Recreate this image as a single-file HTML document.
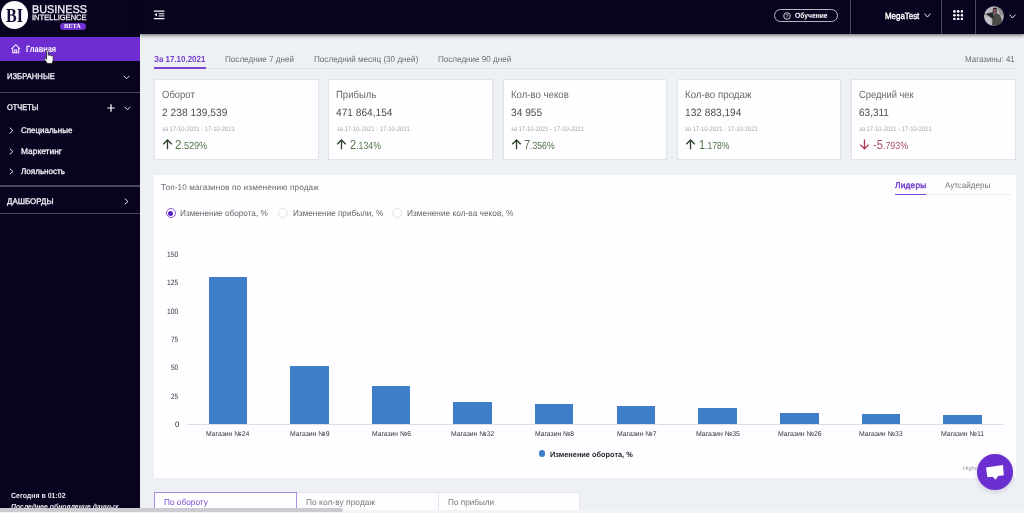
<!DOCTYPE html>
<html lang="ru"><head><meta charset="utf-8"><title>Business Intelligence</title>
<style>
html,body{margin:0;padding:0}
body{width:1024px;height:513px;overflow:hidden;position:relative;background:#eef1f4;font-family:"Liberation Sans", sans-serif;text-rendering:geometricPrecision}
.abs{position:absolute}
#txt{position:absolute;left:0;top:0;width:1024px;height:513px;will-change:transform;opacity:.999}
.sf{font-family:"Liberation Serif", serif}
.t{position:absolute;white-space:nowrap;line-height:1;display:block;transform-origin:0 0}
#side{position:absolute;left:0;top:0;width:140px;height:513px;background:#0a0320}
#head{position:absolute;left:140px;top:0;width:884px;height:33.5px;background:#0a0320;box-shadow:0 1px 4px rgba(0,0,0,.65)}
.sdiv{position:absolute;left:0;width:140px;height:1.4px;background:#4b4660}
.hdiv{position:absolute;top:0;width:1.2px;height:33.5px;background:#4e4a60}
.card{position:absolute;top:79px;width:164.6px;height:80.9px;background:#fefdff;border:1px solid #e1e3e7;box-sizing:border-box}
.bar{position:absolute;width:38.6px;background:#3f7dc8}
.radio{position:absolute;width:10px;height:10px;border-radius:50%;box-sizing:border-box;border:1px solid #e2e2e7;background:#fff}
.btab{position:absolute;top:492px;height:24px;background:#fefdff;box-sizing:border-box;border:1px solid #e4e4ea}
</style></head><body>
<div id="side"></div>
<div id="head"></div>
<!-- logo -->
<div class="abs" style="left:0.6px;top:1.4px;width:27.8px;height:27.8px;border-radius:50%;background:#fdfcff"></div>
<div class="abs" style="left:60.3px;top:23px;width:26px;height:6.8px;border-radius:3.4px;background:#6f33d3"></div>
<!-- active nav -->
<div class="abs" style="left:0;top:36.5px;width:140px;height:24.1px;background:#6d2dd0"></div>
<svg class="abs" style="left:10.8px;top:43.8px" width="10" height="10" viewBox="0 0 10 10"><path d="M0.4 4.8L4.7 0.7 9 4.8M1.7 3.9V8.7H7.7V3.9M3.7 8.7V5.9H5.7V8.7" fill="none" stroke="#f3ecff" stroke-width="1.05" stroke-linejoin="miter"/></svg>
<div class="sdiv" style="top:91.8px"></div>
<div class="sdiv" style="top:185.4px"></div>
<div class="sdiv" style="top:212.8px"></div>
<!-- sidebar chevrons -->
<svg class="abs" style="left:123.3px;top:75.4px" width="7" height="5" viewBox="0 0 7 5"><path d="M0.7 0.8L3.5 3.8 6.3 0.8" fill="none" stroke="#e8e6ee" stroke-width="1"/></svg>
<svg class="abs" style="left:123.5px;top:105.5px" width="7" height="5" viewBox="0 0 7 5"><path d="M0.7 0.8L3.5 3.8 6.3 0.8" fill="none" stroke="#e8e6ee" stroke-width="1"/></svg>
<svg class="abs" style="left:107.2px;top:104.4px" width="8" height="8" viewBox="0 0 8 8"><path d="M4 0.3V7.7M0.3 4H7.7" fill="none" stroke="#fff" stroke-width="1.2"/></svg>
<svg class="abs" style="left:8.6px;top:127.4px" width="5" height="7" viewBox="0 0 5 7"><path d="M0.8 0.7L3.9 3.5 0.8 6.3" fill="none" stroke="#e8e6ee" stroke-width="1"/></svg>
<svg class="abs" style="left:8.6px;top:147.7px" width="5" height="7" viewBox="0 0 5 7"><path d="M0.8 0.7L3.9 3.5 0.8 6.3" fill="none" stroke="#e8e6ee" stroke-width="1"/></svg>
<svg class="abs" style="left:8.6px;top:167.7px" width="5" height="7" viewBox="0 0 5 7"><path d="M0.8 0.7L3.9 3.5 0.8 6.3" fill="none" stroke="#e8e6ee" stroke-width="1"/></svg>
<svg class="abs" style="left:124.3px;top:197.8px" width="5" height="7" viewBox="0 0 5 7"><path d="M0.8 0.7L3.9 3.5 0.8 6.3" fill="none" stroke="#e8e6ee" stroke-width="1"/></svg>
<!-- header icons -->
<svg class="abs" style="left:154px;top:10.4px" width="11" height="10" viewBox="0 0 11 10"><path d="M0 1.15H10.4M0 8.5H10.4" stroke="#fff" stroke-width="1.25" fill="none"/><path d="M4.6 3.8H10.4M4.6 5.95H10.4" stroke="#fff" stroke-width="1" fill="none"/><path d="M2.9 2.7V6.6L0.6 4.65Z" fill="#fff"/></svg>
<div class="abs" style="left:773.6px;top:8.7px;width:64.4px;height:13.4px;box-sizing:border-box;border:1px solid #b9b6c4;border-radius:7px"></div>
<svg class="abs" style="left:783px;top:11.6px" width="8" height="8" viewBox="0 0 8 8"><circle cx="4" cy="4" r="3.3" fill="none" stroke="#fff" stroke-width="0.8"/><path d="M3 3.2C3 2.3 5 2.3 5 3.2C5 3.9 4 3.9 4 4.7M4 5.5V6.1" fill="none" stroke="#fff" stroke-width="0.7"/></svg>
<div class="hdiv" style="left:849.8px"></div>
<div class="hdiv" style="left:940.6px"></div>
<div class="hdiv" style="left:974.6px"></div>
<svg class="abs" style="left:924.3px;top:13.4px" width="7" height="5" viewBox="0 0 7 5"><path d="M0.5 0.6L3.5 4 6.5 0.6" fill="none" stroke="#eceaf2" stroke-width="1"/></svg>
<svg class="abs" style="left:953px;top:10px" width="10.4" height="10.4" viewBox="0 0 10.4 10.4"><g fill="#fff"><circle cx="1.4" cy="1.4" r="1.3"/><circle cx="5.2" cy="1.4" r="1.3"/><circle cx="9" cy="1.4" r="1.3"/><circle cx="1.4" cy="5.2" r="1.3"/><circle cx="5.2" cy="5.2" r="1.3"/><circle cx="9" cy="5.2" r="1.3"/><circle cx="1.4" cy="9" r="1.3"/><circle cx="5.2" cy="9" r="1.3"/><circle cx="9" cy="9" r="1.3"/></g></svg>
<svg class="abs" style="left:984.2px;top:5.5px" width="20" height="20" viewBox="0 0 20 20"><defs><clipPath id="av"><circle cx="10" cy="10" r="9.8"/></clipPath></defs><circle cx="10" cy="10" r="9.8" fill="#b6b6ba"/><g clip-path="url(#av)"><path d="M11 0H20V11L16 8 13.5 3Z" fill="#8e8e93"/><path d="M0 9L6 12 8 20H0Z" fill="#c4c4c8"/><path d="M8.2 20L8.4 11 10 8 13 7.2 16 9 17.6 13 18.2 20Z" fill="#4b4a46"/><path d="M1.5 8L9.2 5.9 9.4 13.2 5.5 10.4Z" fill="#26252b"/><ellipse cx="10.9" cy="4.9" rx="2.3" ry="2.9" fill="#5c4f50"/><path d="M8.7 3.6C9 1.4 12.6 1.2 13.2 3.6L12.6 2.9H9.2Z" fill="#1e1d22"/><circle cx="10.5" cy="4" r="0.75" fill="#d8465a"/><circle cx="11.3" cy="5.9" r="0.7" fill="#d8465a"/></g></svg>
<svg class="abs" style="left:1008.7px;top:13.8px" width="7" height="5" viewBox="0 0 7 5"><path d="M0.5 0.6L3.5 4 6.5 0.6" fill="none" stroke="#eceaf2" stroke-width="1"/></svg>
<!-- tabs -->
<div class="abs" style="left:154px;top:68.2px;width:862px;height:1px;background:#e1e4e9"></div>
<div class="abs" style="left:154px;top:66.8px;width:52px;height:2px;background:#7a45d4"></div>
<div class="card" style="left:154px"></div>
<svg class="abs" style="left:162px;top:139.3px" width="11" height="11" viewBox="0 0 11 11"><path d="M5.5 10.3V1.2M1.3 5.2L5.5 1 9.7 5.2" fill="none" stroke="#2c3e2a" stroke-width="1.3"/></svg>
<div class="card" style="left:328.3px"></div>
<svg class="abs" style="left:336.3px;top:139.3px" width="11" height="11" viewBox="0 0 11 11"><path d="M5.5 10.3V1.2M1.3 5.2L5.5 1 9.7 5.2" fill="none" stroke="#2c3e2a" stroke-width="1.3"/></svg>
<div class="card" style="left:502.6px"></div>
<svg class="abs" style="left:510.6px;top:139.3px" width="11" height="11" viewBox="0 0 11 11"><path d="M5.5 10.3V1.2M1.3 5.2L5.5 1 9.7 5.2" fill="none" stroke="#2c3e2a" stroke-width="1.3"/></svg>
<div class="card" style="left:676.9px"></div>
<svg class="abs" style="left:684.9px;top:139.3px" width="11" height="11" viewBox="0 0 11 11"><path d="M5.5 10.3V1.2M1.3 5.2L5.5 1 9.7 5.2" fill="none" stroke="#2c3e2a" stroke-width="1.3"/></svg>
<div class="card" style="left:851.2px"></div>
<svg class="abs" style="left:859.2px;top:139.3px" width="11" height="11" viewBox="0 0 11 11"><path d="M5.5 0.5V9.6M1.3 5.6L5.5 9.8 9.7 5.6" fill="none" stroke="#b03a50" stroke-width="1.3"/></svg>

<!-- chart panel -->
<div class="abs" style="left:154px;top:175px;width:862px;height:302.8px;background:#fefdff"></div>
<div class="abs" style="left:895px;top:194.4px;width:115.5px;height:1px;background:#ececf1"></div>
<div class="abs" style="left:894.8px;top:193.6px;width:31.6px;height:1.6px;background:#7a45d4"></div>
<div class="radio" style="left:165.5px;top:208.2px;border-color:#8a5ad8"></div>
<div class="abs" style="left:167.9px;top:210.6px;width:5.2px;height:5.2px;border-radius:50%;background:#5a1fc4"></div>
<div class="radio" style="left:278px;top:208.2px"></div>
<div class="radio" style="left:392px;top:208.2px"></div>
<div class="abs" style="left:187px;top:424.3px;width:816.4px;height:1px;background:#d9dfea"></div>
<div class="bar" style="left:208.6px;top:277.2px;height:147.1px"></div><div class="bar" style="left:290.1px;top:366.0px;height:58.3px"></div><div class="bar" style="left:371.8px;top:385.6px;height:38.7px"></div><div class="bar" style="left:453.4px;top:402.4px;height:21.9px"></div><div class="bar" style="left:534.9px;top:403.9px;height:20.4px"></div><div class="bar" style="left:616.6px;top:405.5px;height:18.8px"></div><div class="bar" style="left:698.3px;top:407.8px;height:16.5px"></div><div class="bar" style="left:780.1px;top:412.6px;height:11.7px"></div><div class="bar" style="left:861.7px;top:414.3px;height:10.0px"></div><div class="bar" style="left:943.3px;top:414.9px;height:9.4px"></div>
<div class="abs" style="left:538.7px;top:450.4px;width:6.8px;height:6.8px;border-radius:50%;background:#3f7dc8"></div>
<!-- bottom tabs -->
<div class="btab" style="left:296px;width:143px"></div>
<div class="btab" style="left:438px;width:142px"></div>
<div class="btab" style="left:153.6px;width:143.2px;border-color:#ad8ce6"></div>
<div id="txt">
<span class="t sf" style="left:5.80px;top:6.00px;font-size:20px;color:#140b33;font-weight:700;transform:scaleX(0.8013);">BI</span>
<span class="t" style="left:32.30px;top:5.00px;font-size:11.2px;color:#f6f4fa;transform:scaleX(0.9712);-webkit-text-stroke:0.3px currentColor;">BUSINESS</span>
<span class="t" style="left:32.30px;top:14.00px;font-size:7.7px;color:#ebe8f0;transform:scaleX(0.9836);-webkit-text-stroke:0.3px currentColor;">INTELLIGENCE</span>
<span class="t sf" style="left:64.30px;top:24.00px;font-size:6.3px;color:#ffffff;font-weight:700;letter-spacing:0.056px;transform:scaleX(0.9999);">BETA</span>
<span class="t" style="left:26.00px;top:45.00px;font-size:9px;color:#ffffff;font-weight:700;transform:scaleX(0.8253);">Главная</span>
<span class="t" style="left:6.80px;top:72.00px;font-size:8.3px;color:#f4f2f8;transform:scaleX(0.9223);-webkit-text-stroke:0.3px currentColor;">ИЗБРАННЫЕ</span>
<span class="t" style="left:6.80px;top:103.00px;font-size:8.3px;color:#f4f2f8;transform:scaleX(0.8946);-webkit-text-stroke:0.3px currentColor;">ОТЧЕТЫ</span>
<span class="t" style="left:21.20px;top:126.00px;font-size:8.3px;color:#f4f2f8;transform:scaleX(0.9608);-webkit-text-stroke:0.3px currentColor;">Специальные</span>
<span class="t" style="left:21.20px;top:147.00px;font-size:8.3px;color:#f4f2f8;letter-spacing:0.061px;transform:scaleX(0.9999);-webkit-text-stroke:0.3px currentColor;">Маркетинг</span>
<span class="t" style="left:21.20px;top:167.00px;font-size:8.3px;color:#f4f2f8;transform:scaleX(0.9741);-webkit-text-stroke:0.3px currentColor;">Лояльность</span>
<span class="t" style="left:6.80px;top:198.00px;font-size:8.2px;color:#f4f2f8;transform:scaleX(0.9702);-webkit-text-stroke:0.3px currentColor;">ДАШБОРДЫ</span>
<span class="t" style="left:10.60px;top:492.00px;font-size:7.4px;color:#e8e6ee;font-weight:700;transform:scaleX(0.9419);">Сегодня в 01:02</span>
<span class="t" style="left:10.60px;top:503.00px;font-size:7.4px;color:#e8e6ee;font-weight:700;font-style:italic;transform:scaleX(0.9253);">Последнее обновление данных</span>
<span class="t" style="left:795.00px;top:12.00px;font-size:7.7px;color:#ffffff;font-weight:700;transform:scaleX(0.8735);">Обучение</span>
<span class="t" style="left:885.00px;top:12.00px;font-size:9.2px;color:#ffffff;transform:scaleX(0.8615);-webkit-text-stroke:0.4px currentColor;">MegaTest</span>
<span class="t" style="left:154.20px;top:55.00px;font-size:8.8px;color:#7540cf;font-weight:700;transform:scaleX(0.9020);">За 17.10.2021</span>
<span class="t" style="left:225.30px;top:55.00px;font-size:8.5px;color:#6e6e72;transform:scaleX(0.9539);">Последние 7 дней</span>
<span class="t" style="left:314.00px;top:55.00px;font-size:8.5px;color:#6e6e72;transform:scaleX(0.9541);">Последний месяц (30 дней)</span>
<span class="t" style="left:438.00px;top:55.00px;font-size:8.5px;color:#6e6e72;transform:scaleX(0.9511);">Последние 90 дней</span>
<span class="t" style="left:964.80px;top:55.00px;font-size:8.5px;color:#6e6e72;transform:scaleX(0.9372);">Магазины: 41</span>
<span class="t" style="left:162.00px;top:91.00px;font-size:10.4px;color:#6a6a6e;transform:scaleX(0.9131);">Оборот</span>
<span class="t" style="left:162.00px;top:108.00px;font-size:10.6px;color:#505054;transform:scaleX(0.9653);">2 238 139,539</span>
<span class="t" style="left:162.20px;top:127.00px;font-size:6.6px;color:#a6a6ab;transform:scaleX(0.8896);">за 17-10-2021 - 17-10-2021</span>
<span class="t" style="left:336.30px;top:91.00px;font-size:10.4px;color:#6a6a6e;transform:scaleX(0.9188);">Прибыль</span>
<span class="t" style="left:336.30px;top:108.00px;font-size:10.6px;color:#505054;transform:scaleX(0.9590);">471 864,154</span>
<span class="t" style="left:336.50px;top:127.00px;font-size:6.6px;color:#a6a6ab;transform:scaleX(0.8896);">за 17-10-2021 - 17-10-2021</span>
<span class="t" style="left:510.60px;top:91.00px;font-size:10.4px;color:#6a6a6e;transform:scaleX(0.9263);">Кол-во чеков</span>
<span class="t" style="left:510.60px;top:108.00px;font-size:10.6px;color:#505054;transform:scaleX(0.9597);">34 955</span>
<span class="t" style="left:510.80px;top:127.00px;font-size:6.6px;color:#a6a6ab;transform:scaleX(0.8896);">за 17-10-2021 - 17-10-2021</span>
<span class="t" style="left:684.90px;top:91.00px;font-size:10.4px;color:#6a6a6e;transform:scaleX(0.9367);">Кол-во продаж</span>
<span class="t" style="left:684.90px;top:108.00px;font-size:10.6px;color:#505054;transform:scaleX(0.9573);">132 883,194</span>
<span class="t" style="left:685.10px;top:127.00px;font-size:6.6px;color:#a6a6ab;transform:scaleX(0.8896);">за 17-10-2021 - 17-10-2021</span>
<span class="t" style="left:859.20px;top:91.00px;font-size:10.4px;color:#6a6a6e;transform:scaleX(0.8969);">Средний чек</span>
<span class="t" style="left:859.20px;top:108.00px;font-size:10.6px;color:#505054;transform:scaleX(0.9457);">63,311</span>
<span class="t" style="left:859.40px;top:127.00px;font-size:6.6px;color:#a6a6ab;transform:scaleX(0.8896);">за 17-10-2021 - 17-10-2021</span>
<span class="t" style="left:160.80px;top:184.00px;font-size:8.2px;color:#66666a;letter-spacing:0.121px;transform:scaleX(0.9999);">Топ-10 магазинов по изменению продаж</span>
<span class="t" style="left:895.00px;top:181.00px;font-size:8.3px;color:#6d35c9;letter-spacing:0.230px;transform:scaleX(0.9999);-webkit-text-stroke:0.35px currentColor;">Лидеры</span>
<span class="t" style="left:945.00px;top:181.00px;font-size:8.3px;color:#77777b;transform:scaleX(0.9666);">Аутсайдеры</span>
<span class="t" style="left:180.40px;top:209.00px;font-size:8.6px;color:#66666a;transform:scaleX(0.9546);">Изменение оборота, %</span>
<span class="t" style="left:292.60px;top:209.00px;font-size:8.6px;color:#66666a;transform:scaleX(0.9540);">Изменение прибыли, %</span>
<span class="t" style="left:407.30px;top:209.00px;font-size:8.6px;color:#66666a;transform:scaleX(0.9679);">Изменение кол-ва чеков, %</span>
<span class="t" style="left:166.60px;top:251.00px;font-size:7.8px;color:#33333a;transform:scaleX(0.8630);">150</span>
<span class="t" style="left:166.60px;top:279.00px;font-size:7.8px;color:#33333a;transform:scaleX(0.8630);">125</span>
<span class="t" style="left:166.60px;top:308.00px;font-size:7.8px;color:#33333a;transform:scaleX(0.8630);">100</span>
<span class="t" style="left:170.60px;top:336.00px;font-size:7.8px;color:#33333a;transform:scaleX(0.8355);">75</span>
<span class="t" style="left:170.60px;top:364.00px;font-size:7.8px;color:#33333a;transform:scaleX(0.8355);">50</span>
<span class="t" style="left:170.60px;top:393.00px;font-size:7.8px;color:#33333a;transform:scaleX(0.8355);">25</span>
<span class="t" style="left:174.50px;top:421.00px;font-size:7.8px;color:#33333a;transform:scaleX(0.9999);">0</span>
<span class="t" style="left:206.30px;top:431.00px;font-size:7.1px;color:#33333a;transform:scaleX(0.9646);">Магазин №24</span>
<span class="t" style="left:289.80px;top:431.00px;font-size:7.1px;color:#33333a;transform:scaleX(0.9647);">Магазин №9</span>
<span class="t" style="left:371.80px;top:431.00px;font-size:7.1px;color:#33333a;transform:scaleX(0.9525);">Магазин №6</span>
<span class="t" style="left:451.10px;top:431.00px;font-size:7.1px;color:#33333a;transform:scaleX(0.9646);">Магазин №32</span>
<span class="t" style="left:534.60px;top:431.00px;font-size:7.1px;color:#33333a;transform:scaleX(0.9574);">Магазин №8</span>
<span class="t" style="left:616.60px;top:431.00px;font-size:7.1px;color:#33333a;transform:scaleX(0.9672);">Магазин №7</span>
<span class="t" style="left:695.70px;top:431.00px;font-size:7.1px;color:#33333a;transform:scaleX(0.9802);">Магазин №35</span>
<span class="t" style="left:777.60px;top:431.00px;font-size:7.1px;color:#33333a;transform:scaleX(0.9735);">Магазин №26</span>
<span class="t" style="left:859.00px;top:431.00px;font-size:7.1px;color:#33333a;transform:scaleX(0.9735);">Магазин №33</span>
<span class="t" style="left:940.80px;top:431.00px;font-size:7.1px;color:#33333a;transform:scaleX(0.9715);">Магазин №11</span>
<span class="t" style="left:549.80px;top:451.00px;font-size:7.7px;color:#26262c;font-weight:700;transform:scaleX(0.9587);">Изменение оборота, %</span>
<span class="t" style="left:962.80px;top:467.00px;font-size:5.6px;color:#9a9a9e;letter-spacing:0.077px;transform:scaleX(0.9999);">Highcharts.com</span>
<span class="t" style="left:163.90px;top:498.00px;font-size:8.6px;color:#7a4fd0;transform:scaleX(0.9626);">По обороту</span>
<span class="t" style="left:306.00px;top:498.00px;font-size:8.3px;color:#77777b;letter-spacing:0.079px;transform:scaleX(0.9999);">По кол-ву продаж</span>
<span class="t" style="left:448.00px;top:498.00px;font-size:8.3px;color:#77777b;transform:scaleX(0.9856);">По прибыли</span>
<span class="t" style="left:175.20px;top:138px;font-size:13px;color:#55784a;transform:scaleX(0.8823)">2<span style="font-size:10.3px">.529%</span></span>
<span class="t" style="left:349.70px;top:138px;font-size:13px;color:#55784a;transform:scaleX(0.8492)">2<span style="font-size:10.3px">.134%</span></span>
<span class="t" style="left:524.20px;top:138px;font-size:13px;color:#55784a;transform:scaleX(0.8409)">7<span style="font-size:10.3px">.356%</span></span>
<span class="t" style="left:698.50px;top:138px;font-size:13px;color:#55784a;transform:scaleX(0.8354)">1<span style="font-size:10.3px">.178%</span></span>
<span class="t" style="left:872.90px;top:138px;font-size:13px;color:#ad5066;transform:scaleX(0.8621)">-5<span style="font-size:10.3px">.793%</span></span>

</div>
<!-- chat button -->
<div class="abs" style="left:977px;top:454.2px;width:35.6px;height:35.6px;border-radius:50%;background:#6b2fcf;box-shadow:0 2px 5px rgba(60,40,110,.18)"></div>
<svg class="abs" style="left:977px;top:454.2px" width="36" height="36" viewBox="0 0 36 36"><path d="M9 13.4L26 10.9 26.8 21.3 21 22 18.6 25.7 15.6 22.7 10.4 23.2Z" fill="#fff"/></svg>
<!-- pointer cursor -->
<svg class="abs" style="left:43.4px;top:50.2px" width="12.2" height="14.6" viewBox="0 0 10 14" preserveAspectRatio="none"><path d="M2.9 0.8C2.9 0.2 4.3 0.2 4.3 0.8V5.1C4.3 4.5 5.7 4.5 5.7 5.3C5.7 4.8 7.1 4.9 7.1 5.7C7.1 5.3 8.4 5.4 8.4 6.2V9.3C8.4 11 7.6 11.6 7.4 13H3.5C3.3 11.8 1.6 10.2 0.9 8.5C0.6 7.7 1.6 7.3 2.1 8L2.9 9Z" fill="#fff" stroke="#1a1a1a" stroke-width="0.7" stroke-linejoin="round"/></svg>
<!-- horizontal scrollbar -->
<div class="abs" style="left:0;top:509.6px;width:1024px;height:3.4px;background:#f3f3f5"></div>
<div class="abs" style="left:-4px;top:507.8px;width:346.5px;height:4px;border-radius:2px;background:#cbcbd0"></div>
</body></html>
